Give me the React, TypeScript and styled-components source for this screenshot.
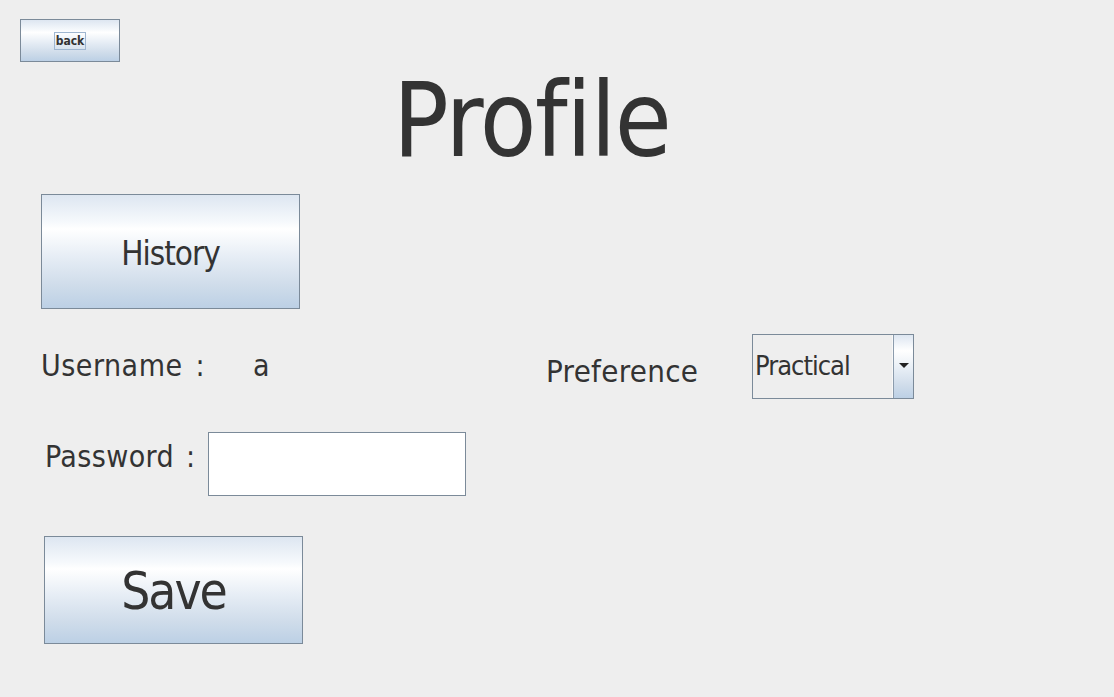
import React from "react";
import styled, { createGlobalStyle } from "styled-components";

const GlobalStyle = createGlobalStyle`
  html, body {
    margin: 0;
    padding: 0;
    background: #eeeeee;
  }
  body {
    font-family: "DejaVu Sans Condensed", "DejaVu Sans", sans-serif;
    color: #333333;
  }
`;

const Page = styled.div`
  width: 1114px;
  height: 697px;
  box-sizing: border-box;
  padding: 19px 0 0 20px;
  background: #eeeeee;
  font-family: "DejaVu Sans Condensed", "DejaVu Sans", sans-serif;
  color: #333333;
  overflow: hidden;
  display: flex;
  flex-direction: column;
  align-items: flex-start;
`;

const NimbusButton = styled.button<{
  $w: number;
  $h: number;
  $size: number;
  $ml?: number;
  $mt?: number;
  $pt?: number;
  $ls?: number;
}>`
  box-sizing: border-box;
  width: ${(p) => p.$w}px;
  height: ${(p) => p.$h}px;
  margin: ${(p) => p.$mt ?? 0}px 0 0 ${(p) => p.$ml ?? 0}px;
  padding: ${(p) => p.$pt ?? 0}px 0 0 0;
  border: 1px solid #7b8a99;
  border-radius: 0;
  background: linear-gradient(
    to bottom,
    #dde6f1 0%,
    #f6f9fc 24%,
    #ffffff 30%,
    #e6edf5 55%,
    #cfdcea 80%,
    #bcd0e5 100%
  );
  font-family: "DejaVu Sans Condensed", "DejaVu Sans", sans-serif;
  font-size: ${(p) => p.$size}px;
  letter-spacing: ${(p) => p.$ls ?? 0}px;
  color: #333333;
  display: flex;
  align-items: center;
  justify-content: center;
  cursor: pointer;
`;

const FocusText = styled.span`
  font-weight: bold;
  font-size: 12px;
  line-height: 16px;
  padding: 0 1px;
  border: 1px solid #9fb6d0;
  color: #333333;
`;

const Title = styled.h1`
  margin: 7px 0 0 373px;
  font-family: "DejaVu Sans Condensed", "DejaVu Sans", sans-serif;
  font-weight: normal;
  font-size: 103px;
  line-height: 103px;
  letter-spacing: -1.5px;
  color: #333333;
`;

const Middle = styled.div`
  display: flex;
  align-items: flex-start;
`;

const LeftColumn = styled.div`
  display: flex;
  flex-direction: column;
  width: 446px;
`;

const Label = styled.span<{
  $size: number;
  $mt?: number;
  $ml?: number;
  $w?: number;
  $ls?: number;
  $ws?: number;
}>`
  display: inline-block;
  font-size: ${(p) => p.$size}px;
  line-height: ${(p) => p.$size}px;
  margin: ${(p) => p.$mt ?? 0}px 0 0 ${(p) => p.$ml ?? 0}px;
  width: ${(p) => (p.$w ? `${p.$w}px` : "auto")};
  letter-spacing: ${(p) => p.$ls ?? 0}px;
  word-spacing: ${(p) => p.$ws ?? 0}px;
  color: #333333;
  white-space: nowrap;
`;

const Row = styled.div<{ $mt: number }>`
  display: flex;
  align-items: flex-start;
  margin-top: ${(p) => p.$mt}px;
`;

const PasswordField = styled.input`
  box-sizing: border-box;
  width: 258px;
  height: 64px;
  margin: 0;
  border: 1px solid #7b8a99;
  background: #ffffff;
  outline: none;
  padding: 0 6px;
  font-family: "DejaVu Sans Condensed", "DejaVu Sans", sans-serif;
  font-size: 20px;
`;

const Combo = styled.div`
  box-sizing: border-box;
  width: 162px;
  height: 65px;
  border: 1px solid #7b8a99;
  display: flex;
  background: #eeeeee;
`;

const ComboValue = styled.div`
  flex: 1;
  display: flex;
  align-items: flex-start;
  padding: 17px 0 0 2px;
  border-right: 1px solid #8c9cad;
  box-shadow: inset -1px 0 0 #f8f8f8;
  font-size: 27px;
  line-height: 27px;
  letter-spacing: -1px;
  color: #333333;
`;

const ComboArrow = styled.div`
  width: 19px;
  display: flex;
  align-items: flex-start;
  justify-content: center;
  padding-top: 28px;
  box-sizing: border-box;
  background: linear-gradient(
    to bottom,
    #dde6f1 0%,
    #ffffff 25%,
    #e6edf5 55%,
    #cfdcea 80%,
    #bcd0e5 100%
  );
`;

export default function App() {
  return (
    <>
      <GlobalStyle />
      <Page>
        <NimbusButton $w={100} $h={43} $size={12}>
          <FocusText>back</FocusText>
        </NimbusButton>
        <Title>Profile</Title>
        <NimbusButton $w={259} $h={115} $size={33} $ml={21} $mt={22} $pt={4} $ls={-1}>
          History
        </NimbusButton>
        <Middle>
          <LeftColumn>
            <Row $mt={42}>
              <Label $size={30} $ml={21} $w={212} $ls={0.5} $ws={4}>Username :</Label>
              <Label $size={30}>a</Label>
            </Row>
            <Row $mt={51}>
              <Label $size={30} $ml={25} $mt={10} $w={163} $ls={0.4} $ws={3}>Password :</Label>
              <PasswordField type="password" />
            </Row>
          </LeftColumn>
          <Row $mt={25}>
            <Label $size={31} $mt={22} $ml={80} $w={206} $ls={0.3}>Preference</Label>
            <Combo>
              <ComboValue>Practical</ComboValue>
              <ComboArrow>
                <svg width="10" height="5" viewBox="0 0 10 5">
                  <path d="M0 0 H10 L5 5 Z" fill="#222" />
                </svg>
              </ComboArrow>
            </Combo>
          </Row>
        </Middle>
        <NimbusButton $w={259} $h={108} $size={51} $ml={24} $mt={40} $pt={2} $ls={-2}>
          Save
        </NimbusButton>
      </Page>
    </>
  );
}
